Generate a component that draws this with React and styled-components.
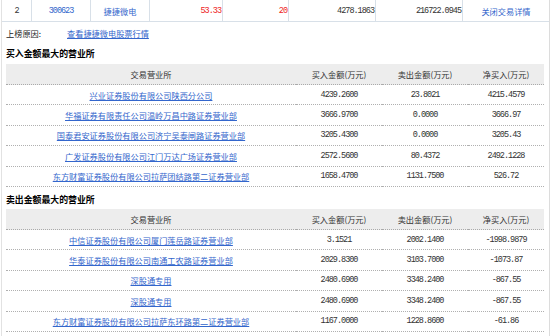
import React from "react";
import styled, { createGlobalStyle } from "styled-components";

const GlobalStyle = createGlobalStyle`
  html, body { margin: 0; padding: 0; background: #fff; }
  body { font-family: "Noto Sans CJK SC", "Liberation Sans", sans-serif; font-size: 8.2px; color: #333; }
  * { box-sizing: border-box; }
`;

const Page = styled.div`
  margin-left: 1px;
  width: 549px;
  min-height: 336px;
  border-left: 1px solid #e2e2e2;
  border-right: 1px solid #dcdcdc;
`;

const TopBar = styled.div`
  display: grid;
  grid-template-columns: 30px 59px 59px 73px 66px 87px 87px 86px;
  height: 22px;
  border-bottom: 1px solid #d8e0e8;
`;

const TopCell = styled.div`
  display: flex;
  align-items: center;
  justify-content: ${(p) => (p.$align === "right" ? "flex-end" : "center")};
  padding-right: ${(p) => (p.$align === "right" ? "1px" : "0")};
  border-right: ${(p) => (p.$last ? "none" : "1px solid #d8e0e8")};
  color: ${(p) => p.$color || "#333"};
  white-space: nowrap;
`;

const Num = styled.span`
  font-family: "Liberation Mono", "DejaVu Sans Mono", monospace;
  font-size: 8.5px;
  letter-spacing: -1px;
  color: ${(p) => p.$color || "inherit"};
`;

const Body = styled.div`
  padding: 0 4px;
`;

const ReasonLine = styled.div`
  display: flex;
  align-items: center;
  height: 20px;
  margin-top: 1px;
  color: #222;
`;

const ReasonLabel = styled.span`
  width: 61px;
`;

const Link = styled.a`
  color: #3366cc;
  text-decoration: ${(p) => (p.$plain ? "none" : "underline")};
  cursor: pointer;
  white-space: nowrap;
`;

const SectionTitle = styled.div`
  display: flex;
  align-items: center;
  height: ${(p) => p.$h || 20}px;
  margin-top: ${(p) => p.$mt || 0}px;
  margin-bottom: ${(p) => p.$mb || 0}px;
  font-size: 8.9px;
  font-weight: bold;
  color: #000;
`;

const Grid = styled.div`
  display: grid;
  grid-template-columns: 290px 86px 86px 76px;
`;

const HeadCell = styled.div`
  display: flex;
  align-items: center;
  justify-content: center;
  height: 21px;
  background: #ededed;
  border-bottom: 1px dotted #aaa;
  color: #333;
`;

const Cell = styled.div`
  display: flex;
  align-items: center;
  justify-content: center;
  height: 20.4px;
  border-bottom: 1px dotted #b0b0b0;
  color: #333;
  white-space: nowrap;
`;

const buyRows = [
  ["兴业证券股份有限公司陕西分公司", "4239.2600", "23.8021", "4215.4579"],
  ["华福证券有限责任公司温岭万昌中路证券营业部", "3666.9700", "0.0000", "3666.97"],
  ["国泰君安证券股份有限公司济宁吴泰闸路证券营业部", "3205.4300", "0.0000", "3205.43"],
  ["广发证券股份有限公司江门万达广场证券营业部", "2572.5600", "80.4372", "2492.1228"],
  ["东方财富证券股份有限公司拉萨团结路第二证券营业部", "1658.4700", "1131.7500", "526.72"],
];

const sellRows = [
  ["中信证券股份有限公司厦门莲岳路证券营业部", "3.1521", "2002.1400", "-1998.9879"],
  ["华泰证券股份有限公司南通工农路证券营业部", "2029.8300", "3103.7000", "-1073.87"],
  ["深股通专用", "2480.6900", "3348.2400", "-867.55"],
  ["深股通专用", "2480.6900", "3348.2400", "-867.55"],
  ["东方财富证券股份有限公司拉萨东环路第二证券营业部", "1167.0000", "1228.8600", "-61.86"],
];

const heads = ["交易营业所", "买入金额(万元)", "卖出金额(万元)", "净买入(万元)"];

function DealTable({ rows }) {
  return (
    <Grid>
      {heads.map((h) => (
        <HeadCell key={h}>{h}</HeadCell>
      ))}
      {rows.map((r, i) => (
        <React.Fragment key={i}>
          <Cell>
            <Link>{r[0]}</Link>
          </Cell>
          <Cell>
            <Num>{r[1]}</Num>
          </Cell>
          <Cell>
            <Num>{r[2]}</Num>
          </Cell>
          <Cell>
            <Num>{r[3]}</Num>
          </Cell>
        </React.Fragment>
      ))}
    </Grid>
  );
}

export default function App() {
  return (
    <>
      <GlobalStyle />
      <Page>
        <TopBar>
          <TopCell>
            <Num>2</Num>
          </TopCell>
          <TopCell $color="#3366cc">
            <Num>300623</Num>
          </TopCell>
          <TopCell>
            <Link $plain>捷捷微电</Link>
          </TopCell>
          <TopCell $align="right">
            <Num $color="#ee2222">53.33</Num>
          </TopCell>
          <TopCell $align="right">
            <Num $color="#ee2222">20</Num>
          </TopCell>
          <TopCell $align="right">
            <Num>4278.1863</Num>
          </TopCell>
          <TopCell $align="right">
            <Num>216722.0945</Num>
          </TopCell>
          <TopCell $last>
            <Link $plain>关闭交易详情</Link>
          </TopCell>
        </TopBar>
        <Body>
          <ReasonLine>
            <ReasonLabel>上榜原因:</ReasonLabel>
            <Link>查看捷捷微电股票行情</Link>
          </ReasonLine>
          <SectionTitle $mb={1}>买入金额最大的营业所</SectionTitle>
          <DealTable rows={buyRows} />
          <SectionTitle $h={19} $mt={3}>卖出金额最大的营业所</SectionTitle>
          <DealTable rows={sellRows} />
        </Body>
      </Page>
    </>
  );
}
